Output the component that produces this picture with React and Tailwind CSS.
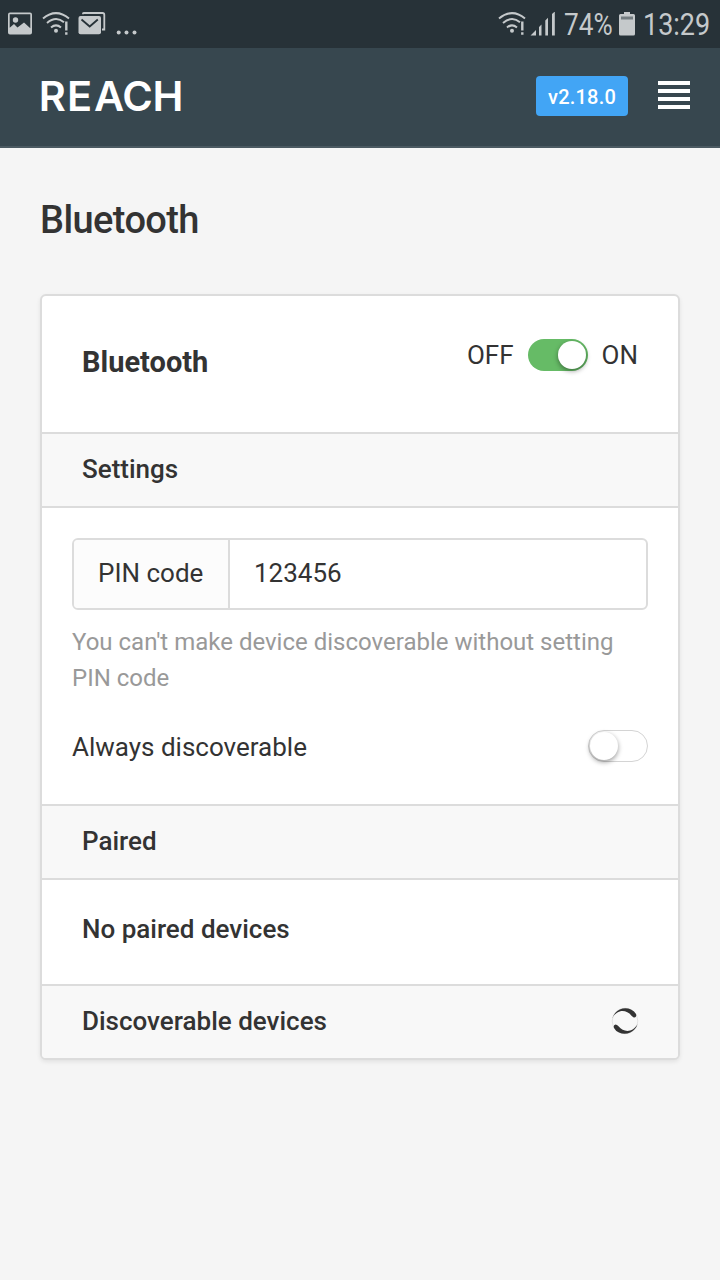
function ImageIcon() {
  return (
    <svg className="ml-2 h-6 w-6 shrink-0" viewBox="0 0 24 24">
      <path fillRule="evenodd" fill="#c5c9cb" d="M2 0.5H22Q24 0.5 24 2.5V20.5Q24 22.5 22 22.5H2Q0 22.5 0 20.5V2.5Q0 0.5 2 0.5ZM1.7 2.2V15.8L6 12L9.5 15.5L16 10.5L22.3 16.2V2.2Z" />
      <circle cx="7.5" cy="8" r="2.7" fill="#c5c9cb" />
    </svg>
  )
}

function WifiIcon() {
  return (
    <svg className="h-6 w-7 shrink-0" viewBox="0 0 28 24" fill="none" stroke="#c5c9cb">
      <path d="M1 6.5Q14 -4.2 27 6.5" strokeWidth="2" />
      <path d="M5 11Q14 3.5 22 10.3" strokeWidth="2" />
      <path d="M9 15.5Q14 11.2 19 15.5" strokeWidth="2" />
      <circle cx="14" cy="18.7" r="2" fill="#c5c9cb" stroke="none" />
      <path d="M24.3 9.5V18.5M24.3 20.2V22.7" strokeWidth="2.4" />
    </svg>
  )
}

function MailIcon() {
  return (
    <svg className="h-6 w-7 shrink-0" viewBox="0 0 28 24">
      <path d="M5 2.2V1.4Q5 1 6 1H24.5Q26.3 1 26.3 2.8V17.5H24" fill="none" stroke="#c5c9cb" strokeWidth="1.8" />
      <rect x="0.5" y="4" width="22.5" height="18.3" rx="2" fill="#c5c9cb" />
      <path d="M3.5 7.5L11.7 14.5L19.8 7.5" fill="none" stroke="#273238" strokeWidth="1.8" />
    </svg>
  )
}

function StatusBar() {
  return (
    <div className="flex h-12 items-start bg-[#273238] pt-[11.5px] text-[#c5c9cb]">
      <ImageIcon />
      <div className="ml-2.5 flex"><WifiIcon /></div>
      <div className="ml-2 flex"><MailIcon /></div>
      <svg className="ml-2.5 h-6 w-6" viewBox="0 0 24 24" fill="#c5c9cb">
        <circle cx="2.7" cy="20.5" r="2" /><circle cx="10.5" cy="20.5" r="2" /><circle cx="18.5" cy="20.5" r="2" />
      </svg>
      <div className="ml-auto flex w-[222px]">
        <WifiIcon />
        <svg className="ml-1 h-6 w-[26px] shrink-0" viewBox="0 0 26 24" fill="#c5c9cb">
          <path d="M0.5 23.5L6 18V23.5ZM9 15L11.5 12.5V23.5H9ZM15.3 8.5L18 5.8V23.5H15.3ZM22 2L24.8 -0.5V23.5H22Z" />
        </svg>
        <div className="ml-2 h-6 w-[55px] text-[31px] leading-[25px]"><div className="w-[60px] origin-left scale-x-[.845]">74%</div></div>
        <svg className="h-6 w-4 shrink-0" viewBox="0 0 16 24" fill="#c5c9cb">
          <path d="M5 0H11V2H14.5Q16 2 16 3.5V22Q16 23.5 14.5 23.5H1.5Q0 23.5 0 22V3.5Q0 2 1.5 2H5Z" />
          <path d="M2 4.5H14V7.5H2Z" fill="#737c80" />
        </svg>
        <div className="ml-2 h-6 w-[67px] text-[31px] leading-[25px]"><div className="w-20 origin-left scale-x-[.87]">13:29</div></div>
      </div>
    </div>
  )
}

function Toggle({ on }) {
  return (
    <div className={`flex h-8 w-[60px] shrink-0 items-center rounded-full ${on ? "justify-end bg-[#66bb66] pr-0.5" : "border border-[#d4d4d4] bg-white pl-px"}`}>
      <div className="h-7 w-7 rounded-full bg-white shadow-[0_2px_5px_rgba(0,0,0,0.4)]" />
    </div>
  )
}

function Spinner() {
  return (
    <svg className="-mr-px -mt-[3px] h-7 w-7" viewBox="0 0 28 28">
      <circle cx="14" cy="14" r="12.8" fill="none" stroke="#ddd" strokeWidth="0.8" />
      <g fill="#333">
        <path d="M1.5 11A13.2 13.2 0 0 1 20 2.5Q23.5 4 25 7Q26 10 23.5 10.5Q22 10.5 20.5 8.7C15 2 6 2.5 1.5 11Z" />
        <path d="M26.5 17A13.2 13.2 0 0 1 8 25.500Q4.500 24 3 21Q2 18 4.500 17.500Q6 17.500 7.500 19.300C13 26 22 25.500 26.500 17Z" />
      </g>
    </svg>
  )
}

export default function App() {
  return (
    <div className="min-h-[1280px] w-[720px] bg-[#f5f5f5] font-['Roboto',sans-serif] text-[26px] leading-9 text-[#333]">
      <StatusBar />
      <header className="flex h-[100px] items-start border-b-2 border-[#4b5a62] bg-[#37474f] pl-10 pr-[30px] pt-7">
        <svg className="h-12 w-36 overflow-visible" viewBox="0 0 144 48">
          <text x="-1.3 26.9 54 82.3 112.6" y="35" fill="#fff" className="font-['Inter',sans-serif] text-[41.5px] font-semibold">REACH</text>
        </svg>
        <div className="ml-auto flex h-10 w-[92px] items-center justify-center rounded-[4px] bg-[#42a5f5] pt-0.5 text-[20px] font-medium tracking-[0.2px] text-white">v2.18.0</div>
        <div className="ml-[30px] mt-[5px] flex flex-col gap-1">
          <div className="h-1 w-8 bg-white" /><div className="h-1 w-8 bg-white" /><div className="h-1 w-8 bg-white" /><div className="h-1 w-8 bg-white" />
        </div>
      </header>
      <main className="px-10 pt-[46px]">
        <h1 className="text-[38px] font-medium leading-[52px] tracking-[-0.6px]">Bluetooth</h1>
        <section className="mt-12 divide-y-2 divide-[#dcdcdc] overflow-hidden rounded-md border-2 border-[#dcdcdc] bg-white shadow-[0_2px_4px_rgba(0,0,0,0.08)]">
          <div className="flex h-[138px] items-start justify-between pl-10 pr-10 pt-[41px]">
            <h2 className="pt-[7px] text-[29px] font-bold">Bluetooth</h2>
            <div className="flex items-center gap-3.5"><span>OFF</span><Toggle on /><span>ON</span></div>
          </div>
          <h3 className="h-[74px] bg-[#f8f8f8] px-10 pt-[17px] font-medium">Settings</h3>
          <div className="h-[298px] px-[30px] pt-[30px]">
            <div className="flex h-[72px] divide-x-2 divide-[#dcdcdc] overflow-hidden rounded-md border-2 border-[#dcdcdc]">
              <div className="w-[156px] bg-[#fcfcfc] pl-6 pt-[15px]">PIN code</div>
              <div className="pl-6 pt-[15px]">123456</div>
            </div>
            <p className="mt-3.5 text-[24px] text-[#999]">You can't make device discoverable without setting PIN code</p>
            <div className="mt-[31px] flex items-center justify-between"><span className="pt-0.5">Always discoverable</span><Toggle /></div>
          </div>
          <h3 className="h-[74px] bg-[#f8f8f8] px-10 pt-[17px] font-medium">Paired</h3>
          <div className="h-[106px] px-10 pt-[31px] font-medium">No paired devices</div>
          <div className="flex h-[72px] items-center justify-between bg-[#f8f8f8] px-10">
            <h3 className="-mt-0.5 font-medium">Discoverable devices</h3>
            <Spinner />
          </div>
        </section>
      </main>
    </div>
  )
}
